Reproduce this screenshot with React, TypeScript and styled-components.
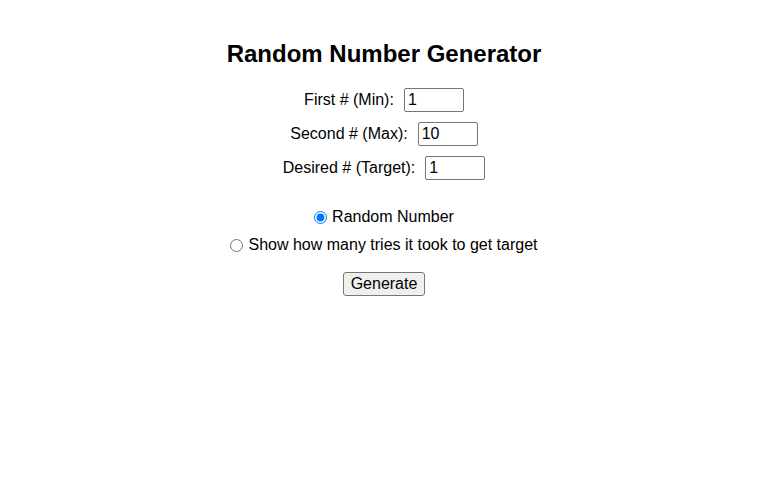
import styled, { createGlobalStyle } from "styled-components";
import { useState } from "react";

const GlobalStyle = createGlobalStyle`
  html, body {
    margin: 0;
    padding: 0;
    background: #ffffff;
  }
  body {
    font-family: "Liberation Sans", Arial, sans-serif;
    color: #000000;
  }
`;

const Container = styled.div`
  display: flex;
  flex-direction: column;
  align-items: center;
  padding-top: 40px;
`;

const Title = styled.h1`
  margin: 0 0 20px;
  font-size: 24px;
  line-height: 28px;
  font-weight: bold;
`;

const Fields = styled.div`
  display: flex;
  flex-direction: column;
  align-items: center;
  gap: 10px;
`;

const FieldRow = styled.label`
  display: flex;
  align-items: center;
  gap: 10px;
  font-size: 16px;
  line-height: 24px;
`;

const NumberInput = styled.input`
  box-sizing: border-box;
  width: 60px;
  height: 24px;
  padding: 1px 3px;
  font-family: "Liberation Sans", Arial, sans-serif;
  font-size: 16px;
  border: 1px solid #767676;
  border-radius: 2px;
  outline: none;
`;

const Options = styled.div`
  display: flex;
  flex-direction: column;
  align-items: center;
  gap: 8px;
  margin-top: 27px;
`;

const OptionRow = styled.label`
  display: flex;
  align-items: center;
  gap: 5px;
  font-size: 16px;
  line-height: 20px;
`;

const Radio = styled.input`
  width: 13px;
  height: 13px;
  margin: 0;
`;

const GenerateButton = styled.button`
  margin-top: 17px;
  height: 24px;
  padding: 1px 7px;
  font-family: "Liberation Sans", Arial, sans-serif;
  font-size: 16px;
  color: #000000;
  background: #efefef;
  border: 1px solid #767676;
  border-radius: 3px;
`;

const App = () => {
  const [min, setMin] = useState("1");
  const [max, setMax] = useState("10");
  const [target, setTarget] = useState("1");
  const [mode, setMode] = useState("random");

  return (
    <>
      <GlobalStyle />
      <Container>
        <Title>Random Number Generator</Title>
        <Fields>
          <FieldRow>
            First # (Min):
            <NumberInput value={min} onChange={(e) => setMin(e.target.value)} />
          </FieldRow>
          <FieldRow>
            Second # (Max):
            <NumberInput value={max} onChange={(e) => setMax(e.target.value)} />
          </FieldRow>
          <FieldRow>
            Desired # (Target):
            <NumberInput
              value={target}
              onChange={(e) => setTarget(e.target.value)}
            />
          </FieldRow>
        </Fields>
        <Options>
          <OptionRow>
            <Radio
              type="radio"
              name="mode"
              checked={mode === "random"}
              onChange={() => setMode("random")}
            />
            Random Number
          </OptionRow>
          <OptionRow>
            <Radio
              type="radio"
              name="mode"
              checked={mode === "tries"}
              onChange={() => setMode("tries")}
            />
            Show how many tries it took to get target
          </OptionRow>
        </Options>
        <GenerateButton>Generate</GenerateButton>
      </Container>
    </>
  );
};

export default App;
